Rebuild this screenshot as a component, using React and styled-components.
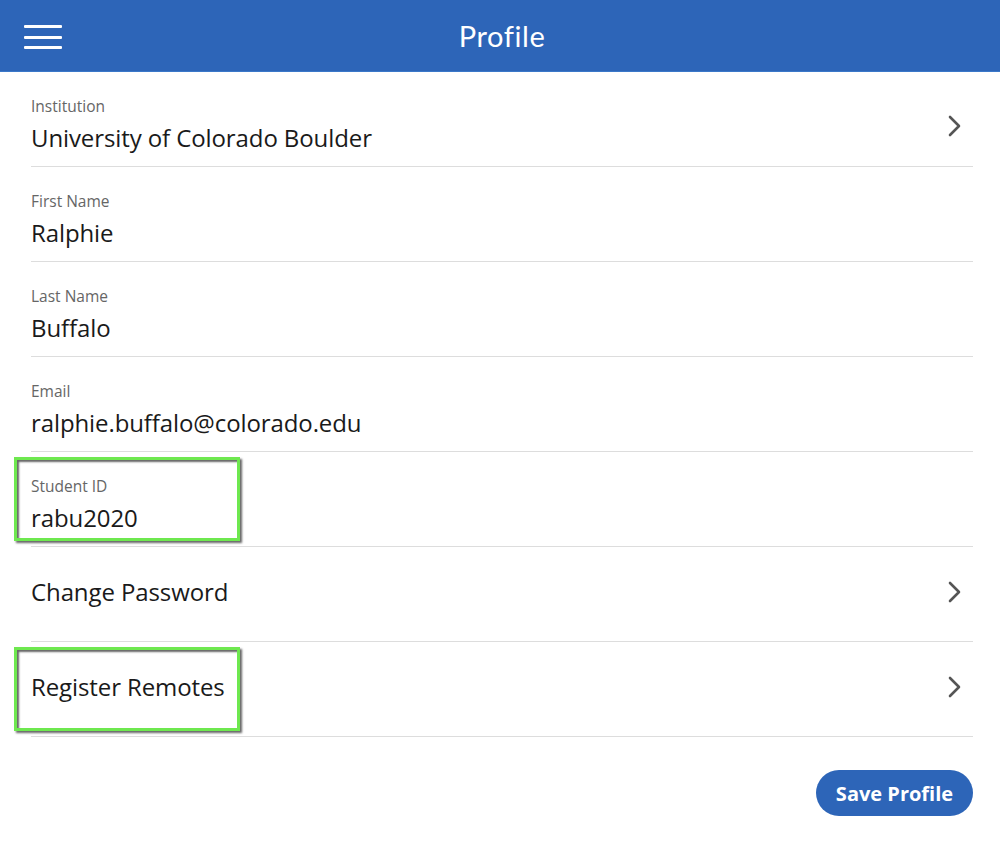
import React from "react";
import styled, { createGlobalStyle } from "styled-components";

const GlobalStyle = createGlobalStyle`
  body {
    margin: 0;
    background: #ffffff;
    font-family: "Open Sans", "Liberation Sans", sans-serif;
  }
`;

const setColor = {
  blue: "#2d65b8",
  blueEdge: "#3b78c9",
  text: "#1a1a1a",
  label: "#666666",
  divider: "#dddddd",
  chevron: "#555555",
  annotate: "#6ee84f",
};

const Page = styled.div`
  width: 1000px;
  min-height: 844px;
  display: flex;
  flex-flow: column nowrap;
`;

const Header = styled.header`
  height: 71px;
  background: ${setColor.blue};
  border-bottom: 1px solid ${setColor.blueEdge};
  display: flex;
  align-items: center;
  justify-content: center;
  position: relative;
`;

const MenuButton = styled.button`
  position: absolute;
  left: 24px;
  top: 25px;
  width: 38px;
  height: 24px;
  padding: 0;
  border: none;
  background: transparent;
  display: flex;
  flex-flow: column nowrap;
  justify-content: space-between;
  span {
    display: block;
    height: 3px;
    background: #ffffff;
    border-radius: 1px;
  }
`;

const Title = styled.h1`
  margin: 0 0 0 4px;
  color: #ffffff;
  font-family: "Lato", "Open Sans", sans-serif;
  font-weight: 400;
  font-size: 29px;
  letter-spacing: 0.6px;
`;

const List = styled.div`
  margin: 0 27px 0 31px;
  display: flex;
  flex-flow: column nowrap;
`;

const Row = styled.div`
  position: relative;
  min-height: 95px;
  box-sizing: border-box;
  border-bottom: 1px solid ${setColor.divider};
  display: flex;
  align-items: center;
  justify-content: space-between;
  padding: ${({ $labelled }) => ($labelled ? "13px 10px 0 0" : "0 10px 5px 0")};
`;

const Field = styled.div`
  display: flex;
  flex-flow: column nowrap;
`;

const Label = styled.div`
  font-size: 15.5px;
  line-height: 18px;
  color: ${setColor.label};
  margin-bottom: 7px;
`;

const Value = styled.div`
  font-size: 24px;
  line-height: 32px;
  letter-spacing: -0.1px;
  color: ${setColor.text};
`;

const Highlight = styled.div`
  position: absolute;
  left: -17px;
  top: ${({ $top }) => $top}px;
  width: 220px;
  height: 78px;
  border: 3px solid ${setColor.annotate};
  box-shadow: 2px 2px 2px rgba(0, 0, 0, 0.6),
    inset 2px 2px 2px rgba(0, 0, 0, 0.6);
  pointer-events: none;
`;

const Footer = styled.div`
  display: flex;
  justify-content: flex-end;
  margin: 33px 27px 0 0;
`;

const SaveButton = styled.button`
  width: 157px;
  height: 46px;
  border: none;
  border-radius: 23px;
  background: ${setColor.blue};
  color: #ffffff;
  font-family: "Open Sans", "Liberation Sans", sans-serif;
  font-weight: 700;
  font-size: 20px;
  cursor: pointer;
`;

const Chevron = () => (
  <svg width="16" height="24" viewBox="0 0 16 24" fill="none">
    <path
      d="M3 3 L12 12 L3 21"
      stroke={setColor.chevron}
      strokeWidth="2.6"
      strokeLinecap="round"
      strokeLinejoin="round"
    />
  </svg>
);

const rows = [
  { label: "Institution", value: "University of Colorado Boulder", link: true },
  { label: "First Name", value: "Ralphie" },
  { label: "Last Name", value: "Buffalo" },
  { label: "Email", value: "ralphie.buffalo@colorado.edu" },
  { label: "Student ID", value: "rabu2020", mark: 5 },
  { value: "Change Password", link: true },
  { value: "Register Remotes", link: true, mark: 5 },
];

const App = () => {
  return (
    <Page>
      <GlobalStyle />
      <Header>
        <MenuButton aria-label="Menu">
          <span />
          <span />
          <span />
        </MenuButton>
        <Title>Profile</Title>
      </Header>
      <List>
        {rows.map((row) => (
          <Row key={row.value} $labelled={!!row.label}>
            <Field>
              {row.label && <Label>{row.label}</Label>}
              <Value>{row.value}</Value>
            </Field>
            {row.link && <Chevron />}
            {row.mark && <Highlight $top={row.mark} />}
          </Row>
        ))}
      </List>
      <Footer>
        <SaveButton>Save Profile</SaveButton>
      </Footer>
    </Page>
  );
};

export default App;
